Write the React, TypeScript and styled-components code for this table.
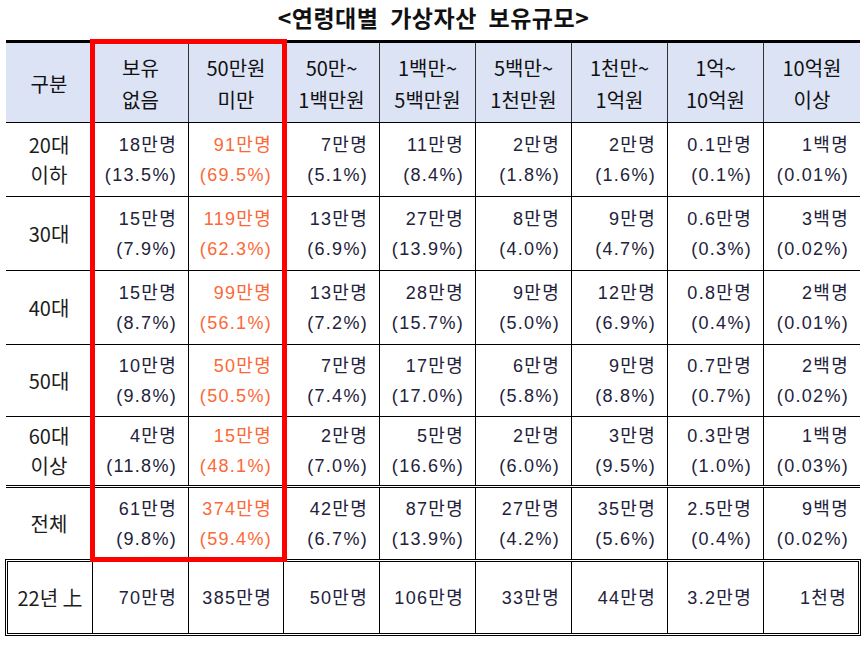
import React from "react";
import styled, { createGlobalStyle } from "styled-components";

const GlobalStyle = createGlobalStyle`
  html, body { margin: 0; padding: 0; background: #ffffff; }
  body { font-family: "Noto Sans CJK KR", "Noto Sans", sans-serif; color: #1c1c1c; }
`;

const COLS = "86px 96px 95px 96px 96px 96px 96px 96px 97px";
const LAST_COLS = "84px 96px 95px 96px 96px 96px 96px 96px 95px";

const Page = styled.div`
  width: 867px;
  height: 645px;
  overflow: hidden;
`;

const Title = styled.h1`
  margin: 0;
  height: 40px;
  line-height: 34px;
  text-align: center;
  font-family: "Noto Sans CJK KR", sans-serif;
  font-weight: 700;
  font-size: 23px;
  letter-spacing: 0.5px;
  word-spacing: 6px;
  color: #111;
`;

const TableWrap = styled.div`
  position: relative;
  margin: 0 7px 0 6px;
  width: 854px;
`;

const HeaderRow = styled.div`
  display: grid;
  grid-template-columns: ${COLS};
  height: 83px;
  box-sizing: border-box;
  border-top: 3px solid #000;
  border-bottom: 1px solid #000;
  background: #dce3f5;
`;

const HeadCell = styled.div<{ $first?: boolean }>`
  display: flex;
  flex-direction: column;
  align-items: center;
  justify-content: center;
  border-left: ${(p) => (p.$first ? "none" : "1px solid #333")};
  font-size: 20px;
  line-height: 32px;
  color: #111;
  padding-top: 2px;
`;

const BodyRow = styled.div<{ $h: number; $double?: boolean; $noBottom?: boolean }>`
  display: grid;
  grid-template-columns: ${COLS};
  height: ${(p) => p.$h}px;
  box-sizing: border-box;
  border-top: ${(p) => (p.$double ? "3px double #000" : "none")};
  border-bottom: ${(p) => (p.$noBottom ? "none" : "1px solid #000")};
`;

const LastRow = styled.div`
  display: grid;
  grid-template-columns: ${LAST_COLS};
  height: 77px;
  margin: 0 -1px;
  box-sizing: border-box;
  border: 3px double #000;
`;

const LabelCell = styled.div<{ $first?: boolean }>`
  display: flex;
  flex-direction: column;
  align-items: center;
  justify-content: center;
  border-left: ${(p) => (p.$first ? "none" : "1px solid #000")};
  font-size: 20px;
  line-height: 30px;
  color: #1c1c1c;
`;

const NumCell = styled.div<{ $accent?: boolean }>`
  display: flex;
  flex-direction: column;
  align-items: flex-end;
  justify-content: center;
  padding-right: 11px;
  border-left: 1px solid #000;
  font-family: "Liberation Sans", "Noto Sans CJK KR", sans-serif;
  font-size: 18px;
  letter-spacing: 1.3px;
  line-height: 30px;
  color: ${(p) => (p.$accent ? "#fb6936" : "#22223a")};
`;

const RedFrame = styled.div`
  position: absolute;
  left: 84px;
  top: -1px;
  width: 197px;
  height: 523px;
  box-sizing: border-box;
  border: 5px solid #ff0000;
  pointer-events: none;
`;

const headers: string[][] = [
  ["구분"],
  ["보유", "없음"],
  ["50만원", "미만"],
  ["50만~", "1백만원"],
  ["1백만~", "5백만원"],
  ["5백만~", "1천만원"],
  ["1천만~", "1억원"],
  ["1억~", "10억원"],
  ["10억원", "이상"],
];

type Row = { label: string[]; h: number; cells: [string, string][]; double?: boolean; noBottom?: boolean };

const rows: Row[] = [
  {
    label: ["20대", "이하"],
    h: 74,
    cells: [
      ["18만명", "(13.5%)"], ["91만명", "(69.5%)"], ["7만명", "(5.1%)"], ["11만명", "(8.4%)"],
      ["2만명", "(1.8%)"], ["2만명", "(1.6%)"], ["0.1만명", "(0.1%)"], ["1백명", "(0.01%)"],
    ],
  },
  {
    label: ["30대"],
    h: 74,
    cells: [
      ["15만명", "(7.9%)"], ["119만명", "(62.3%)"], ["13만명", "(6.9%)"], ["27만명", "(13.9%)"],
      ["8만명", "(4.0%)"], ["9만명", "(4.7%)"], ["0.6만명", "(0.3%)"], ["3백명", "(0.02%)"],
    ],
  },
  {
    label: ["40대"],
    h: 74,
    cells: [
      ["15만명", "(8.7%)"], ["99만명", "(56.1%)"], ["13만명", "(7.2%)"], ["28만명", "(15.7%)"],
      ["9만명", "(5.0%)"], ["12만명", "(6.9%)"], ["0.8만명", "(0.4%)"], ["2백명", "(0.01%)"],
    ],
  },
  {
    label: ["50대"],
    h: 72,
    cells: [
      ["10만명", "(9.8%)"], ["50만명", "(50.5%)"], ["7만명", "(7.4%)"], ["17만명", "(17.0%)"],
      ["6만명", "(5.8%)"], ["9만명", "(8.8%)"], ["0.7만명", "(0.7%)"], ["2백명", "(0.02%)"],
    ],
  },
  {
    label: ["60대", "이상"],
    h: 68,
    noBottom: true,
    cells: [
      ["4만명", "(11.8%)"], ["15만명", "(48.1%)"], ["2만명", "(7.0%)"], ["5만명", "(16.6%)"],
      ["2만명", "(6.0%)"], ["3만명", "(9.5%)"], ["0.3만명", "(1.0%)"], ["1백명", "(0.03%)"],
    ],
  },
  {
    label: ["전체"],
    h: 74,
    double: true,
    noBottom: true,
    cells: [
      ["61만명", "(9.8%)"], ["374만명", "(59.4%)"], ["42만명", "(6.7%)"], ["87만명", "(13.9%)"],
      ["27만명", "(4.2%)"], ["35만명", "(5.6%)"], ["2.5만명", "(0.4%)"], ["9백명", "(0.02%)"],
    ],
  },
];

const lastRow = ["70만명", "385만명", "50만명", "106만명", "33만명", "44만명", "3.2만명", "1천명"];

export default function App() {
  return (
    <Page>
      <GlobalStyle />
      <Title>&lt;연령대별 가상자산 보유규모&gt;</Title>
      <TableWrap>
        <HeaderRow>
          {headers.map((lines, i) => (
            <HeadCell key={i} $first={i === 0}>
              {lines.map((l) => (
                <span key={l}>{l}</span>
              ))}
            </HeadCell>
          ))}
        </HeaderRow>
        {rows.map((r) => (
          <BodyRow key={r.label.join("")} $h={r.h} $double={r.double} $noBottom={r.noBottom}>
            <LabelCell $first>
              {r.label.map((l) => (
                <span key={l}>{l}</span>
              ))}
            </LabelCell>
            {r.cells.map(([a, b], i) => (
              <NumCell key={i} $accent={i === 1}>
                <span>{a}</span>
                <span>{b}</span>
              </NumCell>
            ))}
          </BodyRow>
        ))}
        <LastRow>
          <LabelCell $first>22년 上</LabelCell>
          {lastRow.map((v, i) => (
            <NumCell key={i}>
              <span>{v}</span>
            </NumCell>
          ))}
        </LastRow>
        <RedFrame />
      </TableWrap>
    </Page>
  );
}
